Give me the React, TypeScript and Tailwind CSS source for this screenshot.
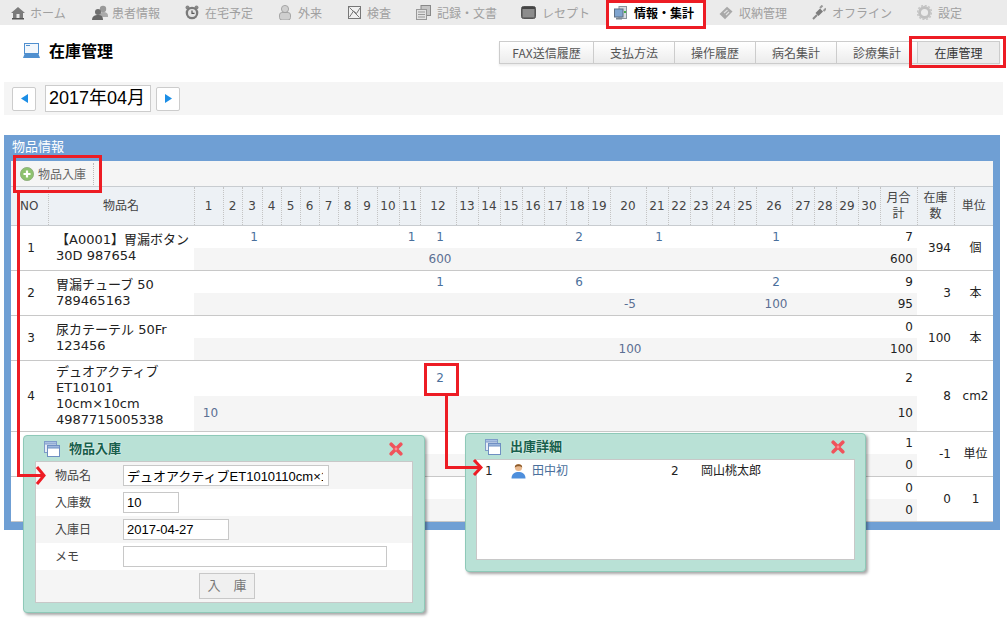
const JP = 'font-["Noto_Sans_CJK_JP",sans-serif]';

function HomeIcon() {
  return (
    <svg width="14" height="14" viewBox="0 0 14 14">
      <path d="M7 1 L14 7 L12 7 L12 13 L2 13 L2 7 L0 7 Z" fill="#7b7b7b" />
      <rect x="5.5" y="8" width="3" height="5" fill="#e8e8e8" />
      <rect x="1" y="12" width="12" height="1.5" fill="#555" />
    </svg>
  );
}

function UsersIcon() {
  return (
    <svg width="16" height="15" viewBox="0 0 16 15">
      <circle cx="11" cy="4" r="3.2" fill="#999" />
      <path d="M7 12 C7 8 9 7 11 7 C14 7 16 8 16 11 L16 12 Z" fill="#aaa" />
      <circle cx="6" cy="7" r="3" fill="#6e6e6e" />
      <path d="M0 15 C0 11 3 10 6 10 C9 10 11 11 11 15 Z" fill="#666" />
    </svg>
  );
}

function ClockIcon() {
  return (
    <svg width="14" height="15" viewBox="0 0 14 15">
      <circle cx="2.5" cy="2.5" r="2" fill="#888" />
      <circle cx="11.5" cy="2.5" r="2" fill="#888" />
      <circle cx="7" cy="8" r="6.3" fill="#7a7a7a" />
      <circle cx="7" cy="8" r="4" fill="#e4e4e4" />
      <path d="M7 5.5 V8.3 H9.5" stroke="#555" strokeWidth="1.2" fill="none" />
    </svg>
  );
}

function PersonIcon() {
  return (
    <svg width="12" height="15" viewBox="0 0 12 15">
      <circle cx="6" cy="4" r="3.6" fill="#d0d0d0" stroke="#999" strokeWidth="0.8" />
      <rect x="0.5" y="7.5" width="11" height="7.5" rx="2.5" fill="#cfcfcf" stroke="#999" strokeWidth="0.8" />
    </svg>
  );
}

function ChartIcon() {
  return (
    <svg width="13" height="13" viewBox="0 0 13 13">
      <rect x="0.5" y="0.5" width="12" height="12" fill="#f0f0f0" stroke="#777" />
      <path d="M1.5 1.5 L11.5 11.5 M1.5 11 L5.5 5 L8.5 7.5 L12 2" stroke="#777" strokeWidth="1" fill="none" />
    </svg>
  );
}

function DocsIcon() {
  return (
    <svg width="15" height="15" viewBox="0 0 15 15">
      <rect x="5" y="0.5" width="9.5" height="10" fill="#c4c4c4" stroke="#888" />
      <rect x="0.5" y="4.5" width="10" height="10" fill="#e2e2e2" stroke="#999" />
      <path d="M2 7 H9 M2 9.5 H9 M2 12 H9" stroke="#999" />
    </svg>
  );
}

function BoxIcon() {
  return (
    <svg width="15" height="13" viewBox="0 0 15 13">
      <rect x="0.5" y="0.5" width="14" height="12" rx="2" fill="#6b6b6b" stroke="#555" />
      <rect x="2" y="3" width="11" height="8" fill="#8c8c8c" />
      <rect x="1" y="1" width="13" height="2" fill="#444" />
    </svg>
  );
}

function MonitorIcon() {
  return (
    <svg width="13" height="14" viewBox="0 0 13 14">
      <rect x="5" y="0.5" width="7.5" height="12" fill="#d6dbe0" stroke="#8a949e" />
      <rect x="0.5" y="3" width="8.5" height="8" fill="#7fa4cf" stroke="#5c6f85" />
      <rect x="2" y="11.5" width="6" height="2" fill="#7b8794" />
      <rect x="10" y="5" width="2" height="2" fill="#46b04a" />
    </svg>
  );
}

function TicketIcon() {
  return (
    <svg width="14" height="14" viewBox="0 0 14 14">
      <path d="M0.5 8 L8 0.8 L13.5 5.5 L6 13.2 Z" fill="#a8a8a8" />
      <path d="M5 7 L8.5 4 M7 9 L10 6" stroke="#e0e0e0" strokeWidth="1.2" />
    </svg>
  );
}

function PlugIcon() {
  return (
    <svg width="14" height="15" viewBox="0 0 14 15">
      <path d="M1 14 L5 10" stroke="#8a8a8a" strokeWidth="2" />
      <path d="M3.5 8 L8 3.5 L11 6.5 L6.5 11 Z" fill="#7d7d7d" />
      <path d="M8 3 L10.5 0.5 M11.5 6 L14 3.5" stroke="#999" strokeWidth="2" />
    </svg>
  );
}

function GearIcon() {
  return (
    <svg width="15" height="15" viewBox="0 0 15 15">
      <circle cx="7.5" cy="7.5" r="5" fill="none" stroke="#c0c0c0" strokeWidth="2.8" />
      <circle cx="7.5" cy="7.5" r="7" fill="none" stroke="#c6c6c6" strokeWidth="1.6" strokeDasharray="2 1.66" />
    </svg>
  );
}

function LaptopIcon() {
  return (
    <svg width="17" height="15" viewBox="0 0 17 15">
      <rect x="1.5" y="0.5" width="14" height="10" fill="#f2f7fc" stroke="#4f8fcf" />
      <rect x="3" y="2" width="4" height="1" fill="#4f8fcf" />
      <path d="M1.5 11 H15.5 L17 15 H0 Z" fill="#4f8fcf" />
    </svg>
  );
}

function WindowsIcon() {
  return (
    <svg width="16" height="16" viewBox="0 0 16 16">
      <rect x="0.5" y="0.5" width="12" height="11" fill="#e6edf6" stroke="#7f9cc9" />
      <rect x="0.5" y="0.5" width="12" height="2.5" fill="#a9c0e2" stroke="#7f9cc9" />
      <rect x="3.5" y="4.5" width="12" height="11" fill="#fff" stroke="#6f8fc2" />
      <rect x="3.5" y="4.5" width="12" height="2.5" fill="#9db7dd" stroke="#6f8fc2" />
    </svg>
  );
}

function CloseIcon() {
  return (
    <svg width="14" height="14" viewBox="0 0 14 14" className="shrink-0">
      <path d="M2.2 2.2 L11.8 11.8 M11.8 2.2 L2.2 11.8" stroke="#f0535b" strokeWidth="3.6" strokeLinecap="round" />
      <circle cx="7" cy="7" r="1.4" fill="#ff8a8f" />
    </svg>
  );
}

function UserBlueIcon() {
  return (
    <svg width="15" height="16" viewBox="0 0 15 16">
      <circle cx="7.5" cy="4.5" r="3.6" fill="#e9b98f" />
      <path d="M3.8 4.5 C3.5 0.2 11.5 0.2 11.2 4.5 C9.5 2.8 6 2.8 3.8 4.5 Z" fill="#8a5a2b" />
      <path d="M0.5 15.5 C0.5 10.5 4 9 7.5 9 C11 9 14.5 10.5 14.5 15.5 Z" fill="#4e8fdc" />
    </svg>
  );
}

function PlusIcon() {
  return (
    <svg width="14" height="14" viewBox="0 0 14 14">
      <circle cx="7" cy="7" r="6.6" fill="#8dc26f" stroke="#8aa97a" strokeWidth="0.8" />
      <path d="M7 3.5 V10.5 M3.5 7 H10.5" stroke="#fff" strokeWidth="2.2" />
    </svg>
  );
}

const navItems = [
  { label: 'ホーム', icon: <HomeIcon />, w: 'w-[81px]', box: 'w-[19px]' },
  { label: '患者情報', icon: <UsersIcon />, w: 'w-[93px]', box: 'w-[20px]' },
  { label: '在宅予定', icon: <ClockIcon />, w: 'w-[94px]', box: 'w-[20px]' },
  { label: '外来', icon: <PersonIcon />, w: 'w-[69px]', box: 'w-[19px]' },
  { label: '検査', icon: <ChartIcon />, w: 'w-[68px]', box: 'w-[19px]' },
  { label: '記録・文書', icon: <DocsIcon />, w: 'w-[105px]', box: 'w-[21px]' },
  { label: 'レセプト', icon: <BoxIcon />, w: 'w-[85px]', box: 'w-[21px]' },
  { label: '情報・集計', icon: <MonitorIcon />, w: 'w-[99px] mr-[14px]', box: 'w-[20px]', active: true },
  { label: '収納管理', icon: <TicketIcon />, w: 'w-[93px]', box: 'w-[20px]' },
  { label: 'オフライン', icon: <PlugIcon />, w: 'w-[105px]', box: 'w-[20px]' },
  { label: '設定', icon: <GearIcon />, w: 'w-[60px]', box: 'w-[21px]' },
];

const subTabs = ['FAX送信履歴', '支払方法', '操作履歴', '病名集計', '診療集計', '在庫管理'];

const dayCols = [
  'w-[29px]', 'w-[19px]', 'w-[20px]', 'w-[19px]', 'w-[19px]', 'w-[19px]', 'w-[19px]', 'w-[19px]', 'w-[20px]', 'w-[22px]',
  'w-[21px]', 'w-[36px]', 'w-[22px]', 'w-[22px]', 'w-[22px]', 'w-[22px]', 'w-[22px]', 'w-[22px]', 'w-[22px]', 'w-[36px]',
  'w-[22px]', 'w-[22px]', 'w-[22px]', 'w-[22px]', 'w-[22px]', 'w-[36px]', 'w-[22px]', 'w-[22px]', 'w-[22px]', 'w-[22px]',
];

type Row = {
  no: number;
  name: string[];
  top: Record<number, number>;
  bottom: Record<number, number>;
  topTotal: number;
  bottomTotal: number;
  stock: number;
  unit: string;
  tall?: boolean;
};

const rows: Row[] = [
  { no: 1, name: ['【A0001】胃漏ボタン', '30D 987654'], top: { 3: 1, 11: 1, 12: 1, 18: 2, 21: 1, 26: 1 }, bottom: { 12: 600 }, topTotal: 7, bottomTotal: 600, stock: 394, unit: '個' },
  { no: 2, name: ['胃漏チューブ 50', '789465163'], top: { 12: 1, 18: 6, 26: 2 }, bottom: { 20: -5, 26: 100 }, topTotal: 9, bottomTotal: 95, stock: 3, unit: '本' },
  { no: 3, name: ['尿カテーテル 50Fr', '123456'], top: {}, bottom: { 20: 100 }, topTotal: 0, bottomTotal: 100, stock: 100, unit: '本' },
  { no: 4, name: ['デュオアクティブ', 'ET10101', '10cm×10cm', '4987715005338'], top: { 12: 2 }, bottom: { 1: 10 }, topTotal: 2, bottomTotal: 10, stock: 8, unit: 'cm2', tall: true },
  { no: 5, name: [], top: {}, bottom: {}, topTotal: 1, bottomTotal: 0, stock: -1, unit: '単位' },
  { no: 6, name: [], top: {}, bottom: {}, topTotal: 0, bottomTotal: 0, stock: 0, unit: '1' },
];

const days = dayCols.map((_, i) => i + 1);

function StockTable() {
  return (
    <table className="w-[982px] table-fixed border-collapse text-[12px] text-[#333]">
      <colgroup>
        <col className="w-[37px]" />
        <col className="w-[146px]" />
        {dayCols.map((w, i) => (
          <col key={i} className={w} />
        ))}
        <col className="w-[37px]" />
        <col className="w-[37px]" />
        <col className="w-[39px]" />
      </colgroup>
      <thead>
        <tr className="h-[39px] bg-[#edf1f5] border-y border-[#c8ccd0] text-[#444] leading-[16px]">
          <th className="p-0 font-normal border-r border-dotted border-[#c4c4c4]">NO</th>
          <th className="p-0 font-normal border-r border-dotted border-[#c4c4c4]">物品名</th>
          {days.map((d) => (
            <th key={d} className="p-0 font-normal border-r border-dotted border-[#c4c4c4]">
              {d}
            </th>
          ))}
          <th className="p-0 font-normal border-r border-dotted border-[#c4c4c4]">
            月合
            <br />計
          </th>
          <th className="p-0 font-normal border-r border-dotted border-[#c4c4c4]">
            在庫
            <br />数
          </th>
          <th className="p-0 font-normal">単位</th>
        </tr>
      </thead>
      <tbody>
        {rows.flatMap((r) => {
          return [
            <tr key={`${r.no}a`} className={r.tall ? 'h-[35px]' : 'h-[22px]'}>
              <td rowSpan={2} className="p-0 pl-[3px] text-center text-[#222]">
                {r.no}
              </td>
              <td rowSpan={2} className="p-0 pl-[8px] text-[13px] leading-[16px] whitespace-nowrap text-[#222]">
                {r.name.map((line) => (
                  <div key={line}>{line}</div>
                ))}
              </td>
              {days.map((d) => (
                <td key={d} className="p-0 pl-[4px] text-center text-[#4a6f9c]">
                  {r.top[d]}
                </td>
              ))}
              <td className="p-0 pr-[4px] text-right text-[#222]">{r.topTotal}</td>
              <td rowSpan={2} className="p-0 pr-[3px] text-right text-[#222]">
                {r.stock}
              </td>
              <td rowSpan={2} className="p-0 pl-[4px] text-center whitespace-nowrap text-[#222]">
                {r.unit}
              </td>
            </tr>,
            <tr key={`${r.no}b`} className={r.tall ? 'h-[36px] border-b border-[#c8c8c8]' : 'h-[23px] border-b border-[#c8c8c8]'}>
              {days.map((d) => (
                <td key={d} className="p-0 pl-[4px] text-center text-[#5b6f93] bg-[#f5f5f5]">
                  {r.bottom[d]}
                </td>
              ))}
              <td className="p-0 pr-[4px] text-right text-[#222] bg-[#f5f5f5]">{r.bottomTotal}</td>
            </tr>,
          ];
        })}
      </tbody>
    </table>
  );
}

function DialogHeader({ title }: { title: string }) {
  return (
    <div className="flex items-center h-[25px] pl-[9px] pr-[10px]">
      <WindowsIcon />
      <span className="ml-[9px] text-[13px] font-bold text-[#17604c] [text-shadow:0_0_2px_#fff]">{title}</span>
      <span className="ml-auto">
        <CloseIcon />
      </span>
    </div>
  );
}

const fieldClass = 'h-[21px] border border-[#c8c8c8] bg-white px-[3px] text-[13px] text-black font-["Liberation_Sans","Noto_Sans_CJK_JP",sans-serif] outline-none';

function ReceiveDialog() {
  return (
    <div className="absolute left-[23px] top-[435px] w-[402px] h-[178px] rounded-[4px] border border-[#8ec9b8] bg-[#b9e1d6] px-[11px] shadow-[2px_2px_3px_rgba(0,0,0,0.35)]">
      <DialogHeader title="物品入庫" />
      <div className="border border-[#c8c8c8] text-[12px] text-[#444]">
        <div className="flex items-center h-[27px] bg-[#f5f5f5]">
          <span className="w-[87px] pl-[19px]">物品名</span>
          <input readOnly value="デュオアクティブET1010110cm×10cm" className={`w-[206px] ${fieldClass} pr-[5px]`} />
        </div>
        <div className="flex items-center h-[27px] bg-white">
          <span className="w-[87px] pl-[19px]">入庫数</span>
          <input readOnly value="10" className={`w-[56px] ${fieldClass}`} />
        </div>
        <div className="flex items-center h-[27px] bg-[#f5f5f5]">
          <span className="w-[87px] pl-[19px]">入庫日</span>
          <input readOnly value="2017-04-27" className={`w-[106px] ${fieldClass}`} />
        </div>
        <div className="flex items-center h-[27px] bg-white">
          <span className="w-[87px] pl-[19px]">メモ</span>
          <input readOnly value="" className={`w-[264px] ${fieldClass}`} />
        </div>
        <div className="flex items-center justify-center h-[32px] pl-[6px] bg-[#f5f5f5]">
          <button className="w-[56px] h-[26px] border border-[#c8c8c8] bg-[#f0f0f0] text-[13px] text-[#777] whitespace-pre">入　庫</button>
        </div>
      </div>
    </div>
  );
}

function DetailDialog() {
  return (
    <div className="absolute left-[465px] top-[433px] w-[401px] h-[139px] rounded-[4px] border border-[#8ec9b8] bg-[#b9e1d6] pl-[10px] pr-[10px] shadow-[2px_2px_3px_rgba(0,0,0,0.35)]">
      <DialogHeader title="出庫詳細" />
      <div className="h-[101px] border border-[#c8c8c8] bg-white text-[12px] text-[#222]">
        <div className="flex items-center h-[22px] pl-[8px]">
          <span className="w-[26px]">1</span>
          <UserBlueIcon />
          <span className="ml-[6px] w-[139px] text-[#4a6f9c]">田中初</span>
          <span className="w-[30px]">2</span>
          <span>岡山桃太郎</span>
        </div>
      </div>
    </div>
  );
}

function Callouts() {
  return (
    <>
      {/* red boxes */}
      <div className="absolute left-[606px] top-0 w-[100px] h-[29px] border-[3px] border-[#ed1c24]" />
      <div className="absolute left-[909px] top-[36px] w-[97px] h-[32px] border-[3px] border-[#ed1c24]" />
      <div className="absolute left-[13px] top-[155px] w-[89px] h-[38px] border-[3px] border-[#ed1c24]" />
      <div className="absolute left-[424px] top-[363px] w-[35px] h-[33px] border-[3px] border-[#ed1c24]" />
      {/* arrows */}
      <div className="absolute left-[17px] top-[193px] w-[3px] h-[284px] bg-[#ed1c24]" />
      <div className="absolute left-[17px] top-[474px] w-[26px] h-[3px] bg-[#ed1c24]" />
      <svg className="absolute left-[35px] top-[466px]" width="11" height="19" viewBox="0 0 11 19">
        <path d="M2 1 L9 9.5 L2 18" fill="none" stroke="#ed1c24" strokeWidth="3" />
      </svg>
      <div className="absolute left-[445px] top-[396px] w-[3px] h-[73px] bg-[#ed1c24]" />
      <div className="absolute left-[445px] top-[466px] w-[35px] h-[3px] bg-[#ed1c24]" />
      <svg className="absolute left-[472px] top-[459px]" width="11" height="17" viewBox="0 0 11 17">
        <path d="M2 1 L9 8.5 L2 16" fill="none" stroke="#ed1c24" strokeWidth="3" />
      </svg>
    </>
  );
}

export default function App() {
  return (
    <div className={`relative w-[1007px] h-[623px] overflow-hidden bg-white font-["DejaVu_Sans","Noto_Sans_CJK_JP",sans-serif]`}>
      {/* top nav */}
      <nav className={`flex items-center h-[25px] pl-[11px] bg-[#ebebeb] text-[12px] text-[#a0a0a0] ${JP}`}>
        {navItems.map((item) => (
          <div
            key={item.label}
            className={`flex items-center h-[25px] shrink-0 ${item.w} ${item.active ? 'pl-[8px] bg-white font-bold text-black' : ''}`}
          >
            <span className={`flex items-center shrink-0 ${item.box}`}>{item.icon}</span>
            <span>{item.label}</span>
          </div>
        ))}
      </nav>

      {/* title and sub tabs */}
      <div className="flex justify-between h-[57px] pl-[23px] pr-[7px] pt-[16px]">
        <div className="flex items-start gap-[9px]">
          <span className="mt-[2px]">
            <LaptopIcon />
          </span>
          <h1 className={`-mt-[1px] text-[16px] leading-[20px] font-bold text-black ${JP}`}>在庫管理</h1>
        </div>
        <div className={`flex h-[23px] border-y border-[#ccc] border-l shadow-[0_2px_2px_rgba(0,0,0,0.08)] text-[12px] text-[#555] ${JP}`}>
          {subTabs.map((t, i) => (
            <div
              key={t}
              className={
                i === 5
                  ? 'flex items-center justify-center w-[82px] border-r border-[#ccc] bg-[#ececec] text-[#333]'
                  : i === 0
                    ? 'flex items-center justify-center w-[94px] border-r border-[#ccc] bg-gradient-to-b from-white to-[#ececec]'
                    : 'flex items-center justify-center w-[81px] border-r border-[#ccc] bg-gradient-to-b from-white to-[#ececec]'
              }
            >
              {t}
            </div>
          ))}
        </div>
      </div>

      {/* month selector */}
      <div className="flex items-center h-[33px] mx-[4px] pl-[8px] bg-[#f5f5f5]">
        <button className="flex items-center justify-center w-[24px] h-[24px] rounded-[2px] border border-[#ccc] bg-white">
          <svg width="7" height="9" viewBox="0 0 7 9">
            <path d="M7 0 V9 L0 4.5 Z" fill="#1c8ee6" />
          </svg>
        </button>
        <div className={`flex items-center ml-[9px] w-[106px] h-[27px] border border-[#ccc] bg-white pl-[3px] text-[18px] text-black font-["Liberation_Sans","Noto_Sans_CJK_JP",sans-serif]`}>
          2017年04月
        </div>
        <button className="flex items-center justify-center ml-[5px] w-[24px] h-[24px] rounded-[2px] border border-[#ccc] bg-white">
          <svg width="7" height="9" viewBox="0 0 7 9">
            <path d="M0 0 V9 L7 4.5 Z" fill="#1c8ee6" />
          </svg>
        </button>
      </div>

      {/* stock panel */}
      <section className="mt-[20px] mx-[4px] w-[996px] bg-[#6f9fd4] px-[7px] pb-[8px]">
        <div className={`h-[26px] pl-[1px] pt-[2px] text-[13px] leading-[18px] text-white ${JP}`}>物品情報</div>
        <div className="bg-white">
          <div className={`flex items-center h-[25px] bg-[#f5f5f5] pl-[9px] text-[12px] text-[#666] ${JP}`}>
            <PlusIcon />
            <span className="ml-[4px]">物品入庫</span>
            <span className="ml-[7px] h-[22px] border-r border-dotted border-[#bbb]" />
          </div>
          <StockTable />
        </div>
      </section>

      <ReceiveDialog />
      <DetailDialog />
      <Callouts />
    </div>
  );
}
